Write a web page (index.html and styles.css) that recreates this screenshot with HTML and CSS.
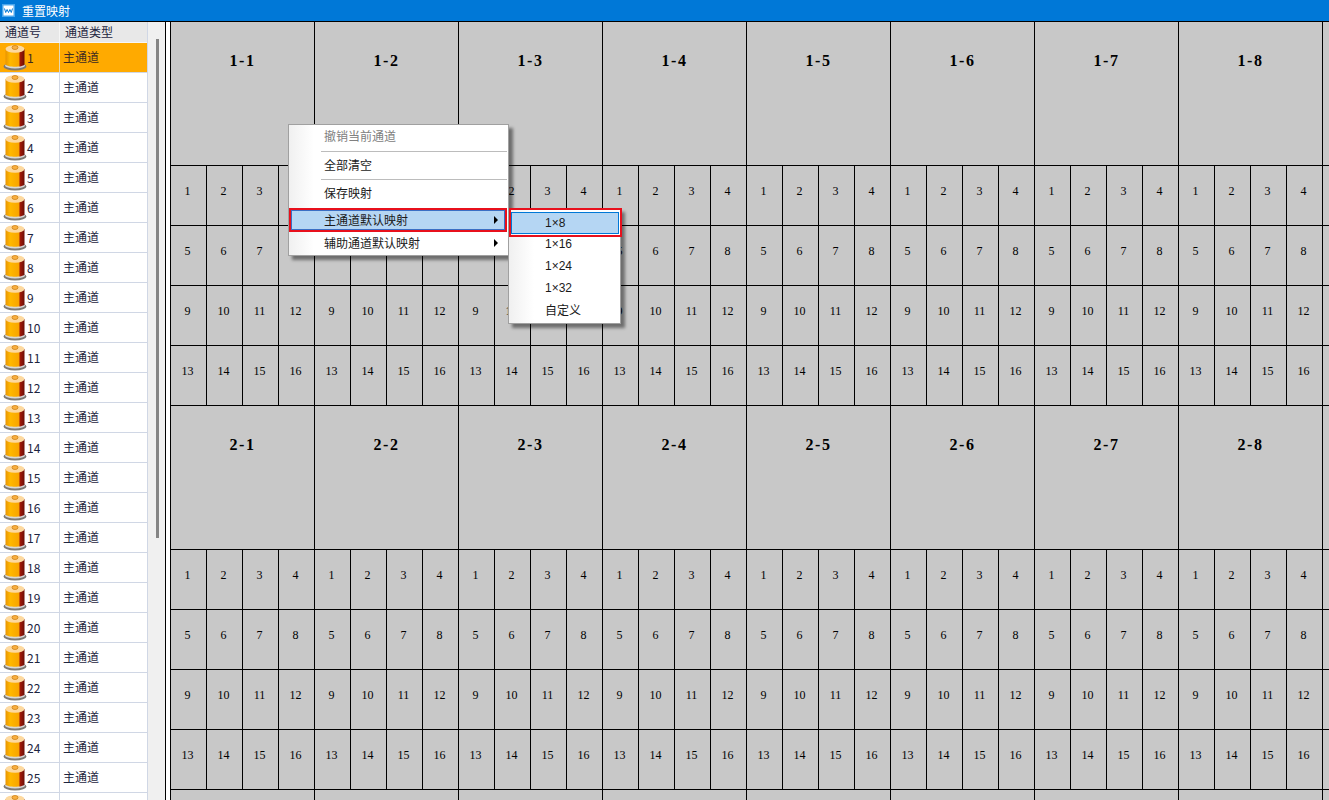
FILE: index.html
```html
<!DOCTYPE html>
<html lang="zh-CN">
<head>
    <meta charset="UTF-8">
    <title>重置映射</title>
    <link rel="stylesheet" href="styles.css">
</head>
<body>
    <svg width="0" height="0" class="defs">
        <defs>
            <linearGradient id="spool-side" x1="0" x2="1" y1="0" y2="0">
                <stop offset="0" stop-color="#e89400"/>
                <stop offset="0.25" stop-color="#ffb800"/>
                <stop offset="0.72" stop-color="#f8a400"/>
                <stop offset="0.75" stop-color="#a81a08"/>
                <stop offset="1" stop-color="#6a0e06"/>
            </linearGradient>
            <symbol id="spool" viewBox="0 0 24 27">
                <ellipse cx="12" cy="22.500" rx="11.500" ry="4" fill="#7c7872"/>
                <ellipse cx="12" cy="21.500" rx="10" ry="3" fill="#d8d8d8"/>
                <path d="M2.500 5V20.500c1.500 3 17.500 3 19 0V5z" fill="url(#spool-side)"/>
                <ellipse cx="12" cy="5" rx="9.500" ry="3.800" fill="#fdd9a0"/>
                <ellipse cx="12" cy="3.500" rx="3" ry="2" fill="#f9b040" stroke="#c87a10" stroke-width=".7"/>
            </symbol>
        </defs>
    </svg>

    <div class="titlebar">
        <svg class="app-icon" viewBox="0 0 13 13">
            <rect width="13" height="13" fill="#4aa6ec"/>
            <rect x="1.500" y="1.500" width="10" height="10" fill="#ffffff"/>
            <path d="M2.500 4.500l1.200 4 1.400-3 1.400 3 1.400-3 1.400 3 1.200-4" fill="none" stroke="#0078d7" stroke-width="1"/>
        </svg>
        <span class="app-title">重置映射</span>
    </div>

    <div class="main">
        <div class="channels">
            <div class="channel-head">
                <div class="col-no">通道号</div>
                <div class="col-type">通道类型</div>
            </div>
            <div id="channel-rows"></div>
        </div>
        <div class="scrollbar"><div class="thumb"></div></div>
        <div class="spacer"></div>
        <div id="map" class="map"></div>
    </div>

    <!-- 右键菜单 -->
    <div class="menu menu-main">
        <div class="menu-item disabled">撤销当前通道</div>
        <div class="menu-sep"></div>
        <div class="menu-item">全部清空</div>
        <div class="menu-sep"></div>
        <div class="menu-item">保存映射</div>
        <div class="menu-item active">主通道默认映射<span class="arrow"></span></div>
        <div class="menu-item">辅助通道默认映射<span class="arrow"></span></div>
    </div>
    <div class="menu menu-sub">
        <div class="menu-item active">1×8</div>
        <div class="menu-item">1×16</div>
        <div class="menu-item">1×24</div>
        <div class="menu-item">1×32</div>
        <div class="menu-item">自定义</div>
    </div>

    <script src="app.js"></script>
</body>
</html>
```

FILE: styles.css
```css
* {
    box-sizing: border-box;
}
html, body {
    height: 100%;
}
body {
    margin: 0;
    width: 1329px;
    height: 800px;
    overflow: hidden;
    background-color: #ffffff;
    font-family: "Noto Sans CJK SC", "Liberation Sans", sans-serif;
    font-size: 12px;
    color: #1c2440;
    display: flex;
    flex-direction: column;
}
.defs {
    position: absolute;
}
.titlebar {
    height: 22px;
    flex: none;
    background-color: #0078d7;
    border-bottom: 1px solid #000000;
    display: flex;
    align-items: center;
    gap: 7px;
    padding: 0 0 1px 2px;
    color: #ffffff;
}
.app-icon {
    width: 13px;
    height: 13px;
    flex: none;
}
.main {
    flex: 1;
    display: flex;
    min-height: 0;
}
.channels {
    width: 148px;
    flex: none;
    overflow: hidden;
    border-right: 1px solid #d0d7e5;
}
.channel-head {
    height: 21px;
    display: flex;
    background-color: #e8e8e8;
    border-bottom: 1px solid #f6f6f6;
    line-height: 20px;
}
.col-no {
    width: 60px;
    padding-left: 5px;
    border-right: 1px solid #f6f6f6;
}
.col-type {
    width: 87px;
    padding-left: 5px;
}
.channel-row {
    height: 30px;
    display: flex;
    border-bottom: 1px solid #d0d7e5;
    background-color: #ffffff;
}
.channel-row.selected {
    background-color: #ffaa00;
    color: #3d2a20;
}
.channel-no {
    width: 60px;
    display: flex;
    align-items: center;
    padding-left: 3px;
    border-right: 1px solid #d0d7e5;
}
.channel-no span {
    margin-top: -1px;
}
.channel-row.selected .channel-no {
    border-right-color: #e8d8b0;
}
.spool {
    width: 24px;
    height: 27px;
    flex: none;
}
.channel-type {
    flex: 1;
    padding-left: 3px;
    line-height: 27px;
}
.scrollbar {
    width: 17px;
    flex: none;
    background-color: #f0f0f0;
    padding: 17px 0 0 8px;
}
.thumb {
    width: 3px;
    height: 499px;
    background-color: #858585;
}
.spacer {
    width: 5px;
    flex: none;
    border-left: 1px solid #000000;
    background-color: #ffffff;
}
.map {
    flex: 1;
    display: grid;
    grid-template-columns: repeat(9, 144px);
    grid-auto-rows: 384px;
    background-color: #c8c8c8;
    overflow: hidden;
    font-family: "Liberation Serif", serif;
    color: #000000;
}
.group-title {
    height: 144px;
    border-left: 1px solid #000000;
    border-bottom: 1px solid #000000;
    padding-top: 29px;
    text-align: center;
    font-size: 16px;
    font-weight: bold;
    letter-spacing: 1.5px;
    line-height: 20px;
}
.group-cells {
    display: grid;
    grid-template-columns: repeat(4, 36px);
    grid-auto-rows: 60px;
}
.cell {
    border-left: 1px solid #000000;
    border-bottom: 1px solid #000000;
    display: flex;
    align-items: center;
    justify-content: center;
    padding: 0 2px 9px 0;
    font-size: 12px;
}
.menu {
    position: absolute;
    background: linear-gradient(to right, #f0f0f0, #ffffff 25px) no-repeat;
    background-color: #ffffff;
    border: 1px solid #a0a0a0;
    box-shadow: 4px 4px 3px rgba(0, 0, 0, 0.45);
    color: #1a1a1a;
}
.menu-main {
    left: 288px;
    top: 124px;
    width: 221px;
    height: 132px;
}
.menu-sub {
    left: 508px;
    top: 208px;
    width: 113px;
    height: 116px;
    padding-top: 3px;
    font-family: "Liberation Sans", "Noto Sans CJK SC", sans-serif;
}
.menu-item {
    position: relative;
    height: 22px;
    line-height: 22px;
    padding-left: 35px;
}
.menu-item.disabled {
    height: 23px;
    color: #808080;
}
.menu-sep {
    height: 1px;
    margin: 3px 1px 2px 32px;
    background-color: #bcbcbc;
}
.menu-main .menu-item.active {
    margin: 4px 1px 0 0;
    height: 24px;
    line-height: 24px;
    background-color: #b5d6f3;
    outline: 2px solid #e8101c;
    outline-offset: -2px;
    box-shadow: inset 0 0 0 3px #3a6fc4;
}
.menu-main .active .arrow {
    top: 8px;
    right: 9px;
}
.menu-sub .menu-item {
    padding-left: 36px;
    line-height: 20px;
}
.menu-sub .menu-item:last-child {
    line-height: 22px;
}
.menu-sub .menu-item.active {
    margin-left: 2px;
    width: 108px;
    padding-left: 34px;
    line-height: 22px;
    background-color: #b5d6f3;
    box-shadow: inset 0 0 0 1px #0078d7;
}
/* el recuadro rojo va por fuera del item */
.menu-sub .menu-item.active::after {
    content: "";
    position: absolute;
    left: -2px;
    top: -4px;
    right: -3px;
    bottom: -3px;
    border: 2px solid #e8101c;
}
.arrow {
    position: absolute;
    right: 10px;
    top: 7px;
    width: 0;
    height: 0;
    border-left: 4px solid #000000;
    border-top: 4px solid transparent;
    border-bottom: 4px solid transparent;
}
```

FILE: app.js
```js
const channelRows = document.getElementById('channel-rows');
const map = document.getElementById('map');

// 左边的通道列表
for (let i = 1; i <= 26; i++) {
    const row = document.createElement('div');
    row.className = i === 1 ? 'channel-row selected' : 'channel-row';
    row.innerHTML =
        '<div class="channel-no"><svg class="spool"><use href="#spool"/></svg><span>' + i + '</span></div>' +
        '<div class="channel-type">主通道</div>';
    channelRows.appendChild(row);
}

// 右边的映射表，每组 16 个小格
for (let r = 1; r <= 3; r++) {
    for (let c = 1; c <= 9; c++) {
        const group = document.createElement('div');
        let cells = '';
        for (let n = 1; n <= 16; n++) {
            cells += '<div class="cell">' + n + '</div>';
        }
        group.innerHTML =
            '<div class="group-title">' + r + '-' + c + '</div>' +
            '<div class="group-cells">' + cells + '</div>';
        map.appendChild(group);
    }
}
```
